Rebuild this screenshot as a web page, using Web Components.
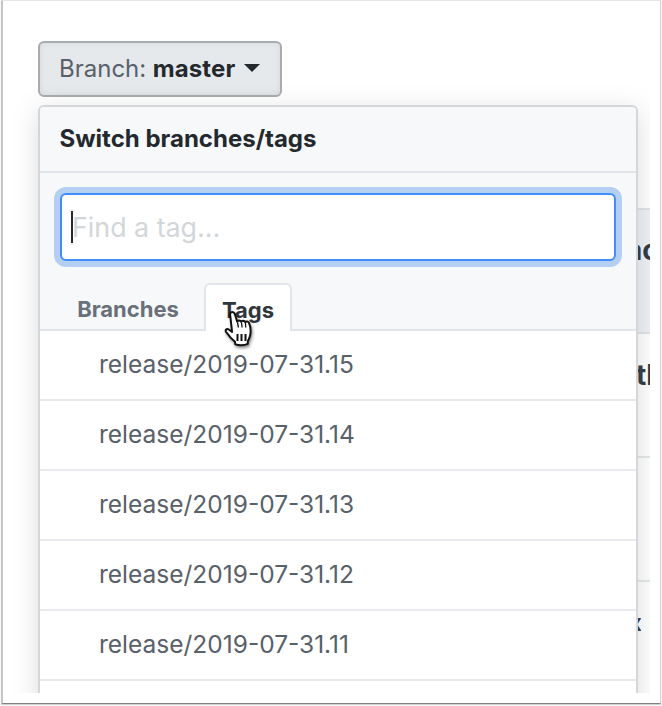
<!DOCTYPE html>
<html lang="en">
<head>
<meta charset="utf-8">
<title>Switch branches/tags</title>
<style>
  html, body { margin: 0; height: 100%; background: #fff; }
  body { font-family: Inter, "Liberation Sans", sans-serif; }
</style>
</head>
<body>
<app-window>
  <backdrop-table slot="backdrop"></backdrop-table>
  <branch-button label="Branch:" branch="master"></branch-button>
  <branch-panel title-text="Switch branches/tags" placeholder="Find a tag...">
    <ref-item>release/2019-07-31.15</ref-item>
    <ref-item>release/2019-07-31.14</ref-item>
    <ref-item>release/2019-07-31.13</ref-item>
    <ref-item>release/2019-07-31.12</ref-item>
    <ref-item>release/2019-07-31.11</ref-item>
    <ref-item></ref-item>
  </branch-panel>
</app-window>

<script>
class AppWindow extends HTMLElement {
  constructor(){
    super();
    this.attachShadow({ mode: 'open' });
    this.shadowRoot.innerHTML = `
      <style>
        :host{
          display: block;
          width: 662px;
          height: 706px;
          box-sizing: border-box;
          padding: 0 1px 2px 1px;
          background: #fff;
          overflow: hidden;
        }
        .frame{
          height: 704px;
          box-sizing: border-box;
          background: #fff;
          border-top: 1px solid #e6e6e6;
          border-left: 2px solid #c6c6c6;
          border-right: 1px solid #d2d2d2;
          border-bottom: 1px solid #808080;
          box-shadow: 0 1px 1px rgba(0,0,0,.18);
        }
        .capture{
          position: relative;
          width: 647px;
          height: 692px;
          overflow: hidden;
          padding: 40px 0 0 35px;
          box-sizing: border-box;
          display: flex;
          flex-direction: column;
          align-items: flex-start;
          gap: 8px;
        }
        ::slotted(backdrop-table){
          position: absolute;
          left: 35px;
          top: 207px;
        }
      </style>
      <div class="frame">
        <div class="capture">
          <slot name="backdrop"></slot>
          <slot></slot>
        </div>
      </div>
    `;
  }
}

class BackdropTable extends HTMLElement {
  constructor(){
    super();
    this.attachShadow({ mode: 'open' });
    this.shadowRoot.innerHTML = `
      <style>
        :host{
          display: block;
          width: 612px;
          font: 700 28px Inter, "Liberation Sans", sans-serif;
          color: #2f363d;
        }
        .row{
          height: 124px;
          box-sizing: border-box;
          border-bottom: 2px solid #e5e7ea;
          display: flex;
          justify-content: flex-end;
          align-items: center;
          overflow: hidden;
          white-space: nowrap;
          line-height: 30px;
        }
        .head{
          height: 126px;
          background: #eef2f7;
          border-top: 2px solid #dfe3e8;
          border-bottom: 2px solid #dfe3e8;
          padding-bottom: 42px;
        }
        .second{ padding-bottom: 40px; }
        .row span{ display: block; width: 13px; overflow: hidden; }
        .row span b{ display: block; font-weight: 700; }
        .head span b{ margin-left: -11px; }
        .second span b{ margin-left: -1px; }
        .tail{ font-size: 24px; align-items: flex-start; padding: 26px 9px 0 0; }
        .tail span{ width: 4px; }
        .tail span b{ margin-left: -9px; }
      </style>
      <div class="row head"><span><b>ac</b></span></div>
      <div class="row second"><span><b>tl</b></span></div>
      <div class="row"></div>
      <div class="row tail"><span><b>x</b></span></div>
    `;
  }
}

class BranchButton extends HTMLElement {
  constructor(){
    super();
    this.attachShadow({ mode: 'open' });
    this.shadowRoot.innerHTML = `
      <style>
        :host{
          display: inline-flex;
          flex: none;
          position: relative;
          align-items: center;
          height: 56px;
          box-sizing: border-box;
          padding: 0 20px 2px 19px;
          gap: 9px;
          background: #e6e9ec;
          border: 2px solid #a9acaf;
          border-radius: 6px;
          font-size: 24px;
          font-weight: 500;
          color: #24292e;
          white-space: nowrap;
          box-shadow: inset 0 0 6px rgba(27,31,35,.08);
        }
        .label{ color: #586069; font-weight: 400; }
        .name{ font-weight: 700; letter-spacing: .15px; }
        svg{ display: block; }
      </style>
      <span><span class="label">${this.getAttribute('label')}</span> <span class="name">${this.getAttribute('branch')}</span></span>
      <svg width="16" height="8" viewBox="0 0 16 8"><path d="M0 0h16L8 8z" fill="#24292e"/></svg>
    `;
  }
}

class BranchPanel extends HTMLElement {
  constructor(){
    super();
    this.attachShadow({ mode: 'open' });
    this.shadowRoot.innerHTML = `
      <style>
        :host{
          display: block;
          flex: none;
          position: relative;
          width: 600px;
          height: 640px;
          box-sizing: border-box;
          background: #fff;
          border: 2px solid #d5d6d8;
          border-radius: 6px;
          box-shadow: 0 6px 26px rgba(110,115,120,.25);
          color: #24292e;
        }
        header{
          height: 66px;
          box-sizing: border-box;
          background: #f6f8fa;
          border-bottom: 2px solid #e1e4e8;
          border-radius: 4px 4px 0 0;
          padding: 0 19.5px 2px;
          display: flex;
          align-items: center;
          font-size: 24px;
          font-weight: 700;
        }
        .filter{
          background: #f6f8fa;
          padding: 20px 20px 21px;
        }
        .input{
          height: 68px;
          box-sizing: border-box;
          background: #fff;
          border: 2px solid #3f8efc;
          border-radius: 6px;
          box-shadow: 0 0 0 6px #b4cff2;
          display: flex;
          align-items: center;
          padding-left: 9px;
          font-size: 26.8px;
          color: #d3d6d9;
        }
        .caret{
          width: 2px;
          height: 32px;
          background: #24292e;
          margin-right: -1px;
        }
        nav{
          background: #f6f8fa;
          display: flex;
          align-items: flex-end;
          height: 49px;
          padding-left: 18px;
          box-sizing: border-box;
          border-bottom: 2px solid #e1e4e8;
          font-size: 22px;
          font-weight: 700;
        }
        .tab{
          height: 48px;
          box-sizing: border-box;
          display: flex;
          align-items: center;
          justify-content: center;
          padding-top: 3px;
        }
        .tab.off{ width: 146px; color: #697079; padding: 7px 6px 0 0; }
        .tab.on{
          width: 88px;
          background: #fff;
          border: 2px solid #e1e4e8;
          border-bottom: none;
          border-radius: 6px 6px 0 0;
          margin-bottom: -2px;
          color: #2f363d;
        }
        .hand{
          position: absolute;
          left: 184px;
          top: 203px;
          filter: drop-shadow(1px 2px 1.5px rgba(0,0,0,.45));
        }
      </style>
      <header>${this.getAttribute('title-text')}</header>
      <div class="filter">
        <div class="input"><span class="caret"></span><span>${this.getAttribute('placeholder')}</span></div>
      </div>
      <nav>
        <div class="tab off">Branches</div>
        <div class="tab on">Tags</div>
      </nav>
      <slot></slot>
      <svg class="hand" width="32" height="40" viewBox="0 0 32 40">
        <path d="M7 2.500c1.600-1 3.400 0 3.900 1.600l2.300 7.600c.5-1.600 3.200-1.900 4 .1.600-1.500 3.300-1.600 4 .4.800-1.200 3.300-1 3.900 1 1.300 3 1.800 7.300 1.300 11-.4 3-1.400 5-2.600 7.300v2.400c-3.200 1.400-8 1.700-12.500.5l-.3-2.700c-3-2.500-6.500-6.300-9-10-1-1.600.6-3.300 2.400-2.400l3.700 2.700L6.300 6c-.4-1.500-.2-2.800.7-3.500z" fill="#fff" stroke="#111" stroke-width="2" stroke-linejoin="round"/>
        <path d="M13.500 24v7M17.500 24v7M21.500 24v7" stroke="#111" stroke-width="2" fill="none"/>
        <path d="M13.500 12.500l1 5M17.500 12.500l.6 5M21.500 13l.2 4.500" stroke="#111" stroke-width="1.300" fill="none"/>
      </svg>
    `;
  }
}

class RefItem extends HTMLElement {
  constructor(){
    super();
    this.attachShadow({ mode: 'open' });
    this.shadowRoot.innerHTML = `
      <style>
        :host{
          display: block;
          height: 70px;
          box-sizing: border-box;
          border-bottom: 2px solid #e9e9ee;
          padding: 0 0 3px 59px;
          font-size: 24.5px;
          line-height: 67px;
          color: #586069;
          background: #fff;
        }
        :host(:last-child){ border-bottom: none; }
      </style>
      <slot></slot>
    `;
  }
}

customElements.define('app-window', AppWindow);
customElements.define('backdrop-table', BackdropTable);
customElements.define('branch-button', BranchButton);
customElements.define('branch-panel', BranchPanel);
customElements.define('ref-item', RefItem);
</script>
</body>
</html>
